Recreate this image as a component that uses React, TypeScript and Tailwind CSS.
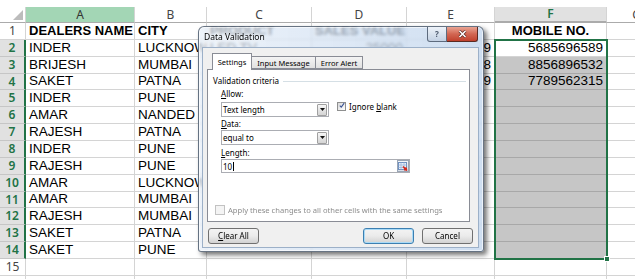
import React from 'react';

type Col = { id: string; w: string; head: string; cell: string };

const cols: Col[] = [
  { id: 'A', w: 'w-[109px]', head: 'bg-[#a3d6b5] text-[#333]', cell: 'justify-start' },
  { id: 'B', w: 'w-[72px]', head: 'bg-white text-[#444]', cell: 'justify-start' },
  { id: 'C', w: 'w-[105px]', head: 'bg-white text-[#444]', cell: 'justify-start' },
  { id: 'D', w: 'w-[95px]', head: 'bg-white text-[#444]', cell: 'justify-end' },
  { id: 'E', w: 'w-[88px]', head: 'bg-white text-[#444]', cell: 'justify-end' },
  { id: 'F', w: 'w-[112px]', head: 'bg-[#e1e1e1] text-[#217346] font-semibold border-b-2 border-b-[#217346]', cell: 'justify-end' },
  { id: 'G', w: 'w-[60px]', head: 'bg-white text-[#444]', cell: 'justify-start' },
];

// C..E of rows 3-4 sit under the dialog body, so they're left blank
const rows: string[][] = [
  ['DEALERS NAME', 'CITY', 'PRODUCT', 'SALES VALUE', '', 'MOBILE NO.'],
  ['INDER', 'LUCKNOW', 'LED TV', '25000', '9', '5685696589'],
  ['BRIJESH', 'MUMBAI', '', '', '8', '8856896532'],
  ['SAKET', 'PATNA', '', '', '9', '7789562315'],
  ['INDER', 'PUNE', '', '', '', ''],
  ['AMAR', 'NANDED', '', '', '', ''],
  ['RAJESH', 'PATNA', '', '', '', ''],
  ['INDER', 'PUNE', '', '', '', ''],
  ['RAJESH', 'PUNE', '', '', '', ''],
  ['AMAR', 'LUCKNOW', '', '', '', ''],
  ['AMAR', 'MUMBAI', '', '', '', ''],
  ['RAJESH', 'MUMBAI', '', '', '', ''],
  ['SAKET', 'PATNA', '', '', '', ''],
  ['SAKET', 'PUNE', '', '', '', ''],
  ['', '', '', '', '', ''],
  ['', '', '', '', '', ''],
];

function Sheet() {
  return (
    <div className="pt-[7px]">
      <div className="flex h-[16px]">
        <div className="flex h-full w-[26px] shrink-0 items-end justify-end border-r border-b border-r-[#d4d4d4] border-b-[#ababab] bg-white pr-[2px] pb-[2px]">
          <svg width="10" height="10" viewBox="0 0 10 10">
            <path d="M10 0V10H0z" fill="#bcbcbc" />
          </svg>
        </div>
        {cols.map((c) => (
          <div
            key={c.id}
            className={`flex h-full shrink-0 items-center justify-center border-r border-b border-r-[#d4d4d4] border-b-[#ababab] font-['Noto_Sans',sans-serif] text-[12px] ${c.w} ${c.head}`}
          >
            {c.id}
          </div>
        ))}
      </div>
      {rows.map((r, i) => {
        const n = i + 1;
        const sel = n >= 2 && n <= 14;
        return (
          <div key={n} className="flex h-[16.86px]">
            <div
              className={
                sel
                  ? "flex h-full w-[26px] shrink-0 items-center justify-center border-r-2 border-b border-r-[#217346] border-b-[#c6c6c6] bg-[#e1e1e1] font-['Noto_Sans',sans-serif] text-[12px] font-semibold text-[#217346]"
                  : "flex h-full w-[26px] shrink-0 items-center justify-center border-r border-b border-[#d4d4d4] bg-white font-['Noto_Sans',sans-serif] text-[12px] text-[#444]"
              }
            >
              {n}
            </div>
            {cols.map((c, j) => {
              const v = r[j] ?? '';
              const grey = c.id === 'F' && n >= 3 && n <= 14;
              const head = n === 1;
              return (
                <div
                  key={c.id}
                  className={`flex h-full shrink-0 items-center overflow-hidden whitespace-nowrap border-r border-b px-[3px] ${c.w} ${
                    grey ? 'border-[#a8a8a8] bg-[#c6c6c6]' : 'border-[#d4d4d4] bg-white'
                  } ${head ? 'text-[13px] font-bold' : 'text-[13.5px]'} ${
                    head && c.id === 'F' ? 'justify-center' : head ? 'justify-start' : c.cell
                  }`}
                >
                  {v}
                </div>
              );
            })}
          </div>
        );
      })}
    </div>
  );
}

function Check({ checked, disabled }: { checked?: boolean; disabled?: boolean }) {
  return (
    <span
      className={
        disabled
          ? 'flex h-[10px] w-[10px] shrink-0 items-center justify-center border border-[#c2c2c2] bg-[#f4f4f4]'
          : 'flex h-[9px] w-[9px] shrink-0 items-center justify-center border border-[#8e8f8f] bg-linear-to-br from-[#d8d8d8] to-white'
      }
    >
      {checked && (
        <svg width="9" height="9" viewBox="0 0 9 9" className="-mt-[2px] ml-[1px]">
          <path d="M1.2 4.6 3.4 7 7.8 1" fill="none" stroke="#3b5394" strokeWidth="1.6" />
        </svg>
      )}
    </span>
  );
}

function Combo({ value }: { value: string }) {
  return (
    <div className="flex h-[15px] w-[108px] items-center border border-[#abadb3] bg-white">
      <span className="flex-1 pl-[1px]">{value}</span>
      <span className="mr-px flex h-[12px] w-[10px] items-center justify-center rounded-[1px] border border-[#a0a0a0] bg-linear-to-b from-[#f6f6f6] to-[#d4d4d4]">
        <svg width="5" height="3" viewBox="0 0 5 3">
          <path d="M0 0h5L2.5 3z" fill="#111" />
        </svg>
      </span>
    </div>
  );
}

function Btn({ children, primary }: { children: React.ReactNode; primary?: boolean }) {
  return (
    <button
      type="button"
      className={`flex h-[16px] w-[51px] items-center justify-center rounded-[3px] border bg-linear-to-b from-[#f3f3f3] via-[#ebebeb] to-[#d2d2d2] ${
        primary ? 'border-[#3c7fb1] shadow-[inset_0_0_0_1px_#a9daf7]' : 'border-[#707070]'
      }`}
    >
      {children}
    </button>
  );
}

function Dialog() {
  return (
    <div className="absolute top-[26px] left-[198px] flex h-[226px] w-[286px] flex-col rounded-t-[6px] rounded-b-[3px] border border-[#4a5666]/80 bg-linear-to-r from-[#e6eef8]/70 to-[#bed3ec]/75 pr-[5px] pb-[4px] pl-[4px] font-['Noto_Sans',sans-serif] text-[8px] leading-[10px] text-black shadow-[inset_0_0_0_1px_rgba(255,255,255,0.6),3px_3px_5px_rgba(0,0,0,0.55)] backdrop-blur-[1.5px]">
      <div className="flex h-[21px] items-start justify-between">
        <span className="mt-[5px] ml-[1px] text-[8.5px] [text-shadow:0_0_4px_rgba(255,255,255,0.95)]">Data Validation</span>
        <div className="flex">
          <div className="flex h-[15px] w-[20px] items-center justify-center rounded-bl-[3px] border border-t-0 border-[#5d6b7e] bg-linear-to-b from-[#eef3f9] to-[#c3d1e3]">
            <span className="text-[8px] font-bold text-[#4a586c]">?</span>
          </div>
          <div className="flex h-[15px] w-[31px] items-center justify-center rounded-br-[3px] border border-t-0 border-l-0 border-[#5a2a22] bg-linear-to-b from-[#e9a493] via-[#d26652] to-[#c0402c]">
            <svg width="9" height="8" viewBox="0 0 9 8">
              <path d="M1.5 1 7.5 7M7.5 1 1.5 7" stroke="#5a2a22" strokeWidth="3" />
              <path d="M1.5 1 7.5 7M7.5 1 1.5 7" stroke="#fff" strokeWidth="1.6" />
            </svg>
          </div>
        </div>
      </div>
      <div className="flex flex-1 flex-col bg-[#f0f0f0] pt-[5px] pr-[8px] pl-[4px] shadow-[0_0_0_1px_#9cb0c8]">
        <div className="relative z-10 flex h-[16px] items-end pl-[5px] text-[7.5px]">
          <div className="-mb-px flex h-[17px] w-[40px] items-center justify-center border border-b-0 border-[#898c95] bg-white">
            Settings
          </div>
          <div className="flex h-[13px] w-[64px] items-center justify-center border border-l-0 border-[#898c95] bg-linear-to-b from-[#f4f4f4] to-[#e1e1e1]">
            Input Message
          </div>
          <div className="flex h-[13px] w-[47px] items-center justify-center border border-l-0 border-[#898c95] bg-linear-to-b from-[#f4f4f4] to-[#e1e1e1]">
            Error Alert
          </div>
        </div>
        <div className="flex h-[153px] flex-col border border-[#898c95] bg-white">
          <div className="flex items-center pt-[6px] pr-[3px] pl-[5px]">
            <span>Validation criteria</span>
            <span className="ml-[4px] h-px flex-1 bg-[#d5dfe5]" />
          </div>
          <div className="flex flex-col pl-[13px]">
            <span className="mt-[3px]">
              <u>A</u>llow:
            </span>
            <div className="mt-[3px] flex">
              <Combo value="Text length" />
              <div className="ml-[8px] flex h-[9px] items-center gap-[3px]">
                <Check checked />
                <span>
                  Ignore <u>b</u>lank
                </span>
              </div>
            </div>
            <span className="mt-[2px]">
              <u>D</u>ata:
            </span>
            <div className="mt-[1px]">
              <Combo value="equal to" />
            </div>
            <span className="mt-[3px]">
              <u>L</u>ength:
            </span>
            <div className="mt-[1px] flex h-[14px] w-[189px] items-center border border-[#abadb3] bg-white">
              <span className="flex-1 pl-[1px]">
                10<span className="ml-px inline-block h-[9px] w-px translate-y-[1px] bg-black" />
              </span>
              <span className="flex h-[12px] w-[12px] items-center justify-center border border-[#9aa6b6] bg-linear-to-b from-[#f5f7fa] to-[#d7dde6]">
                <svg width="10" height="9" viewBox="0 0 10 9">
                  <rect x="0.5" y="0.5" width="8" height="7" fill="#e8f0fa" stroke="#6d8fc0" />
                  <path d="M0.5 3h8M0.5 5.5h8M3 0.5v7M6 0.5v7" stroke="#9cb6da" strokeWidth="0.8" />
                  <path d="M5 4.5 9 8.5" stroke="#d42a1c" strokeWidth="1.6" />
                  <rect x="6" y="5.5" width="3" height="3" fill="#d42a1c" />
                </svg>
              </span>
            </div>
          </div>
          <div className="mt-auto flex items-center gap-[3px] pb-[6px] pl-[7px] text-[7.6px] text-[#8d8d8d]">
            <Check disabled />
            <span>Apply these changes to all other cells with the same settings</span>
          </div>
        </div>
        <div className="-mr-[3px] mt-[6px] ml-[1px] flex">
          <Btn>
            <span>
              <u>C</u>lear All
            </span>
          </Btn>
          <div className="flex-1" />
          <Btn primary>OK</Btn>
          <div className="w-[8px]" />
          <Btn>Cancel</Btn>
        </div>
      </div>
    </div>
  );
}

export default function App() {
  return (
    <div className="relative h-[279px] w-[635px] overflow-hidden bg-white font-['Liberation_Sans',Arial,sans-serif] text-black">
      <Sheet />
      <div className="absolute top-[39px] left-[494px] h-[221px] w-[114px] border-2 border-[#217346]" />
      <div className="absolute top-[256px] left-[604px] h-[6px] w-[6px] border border-white bg-[#217346]" />
      <Dialog />
    </div>
  );
}
